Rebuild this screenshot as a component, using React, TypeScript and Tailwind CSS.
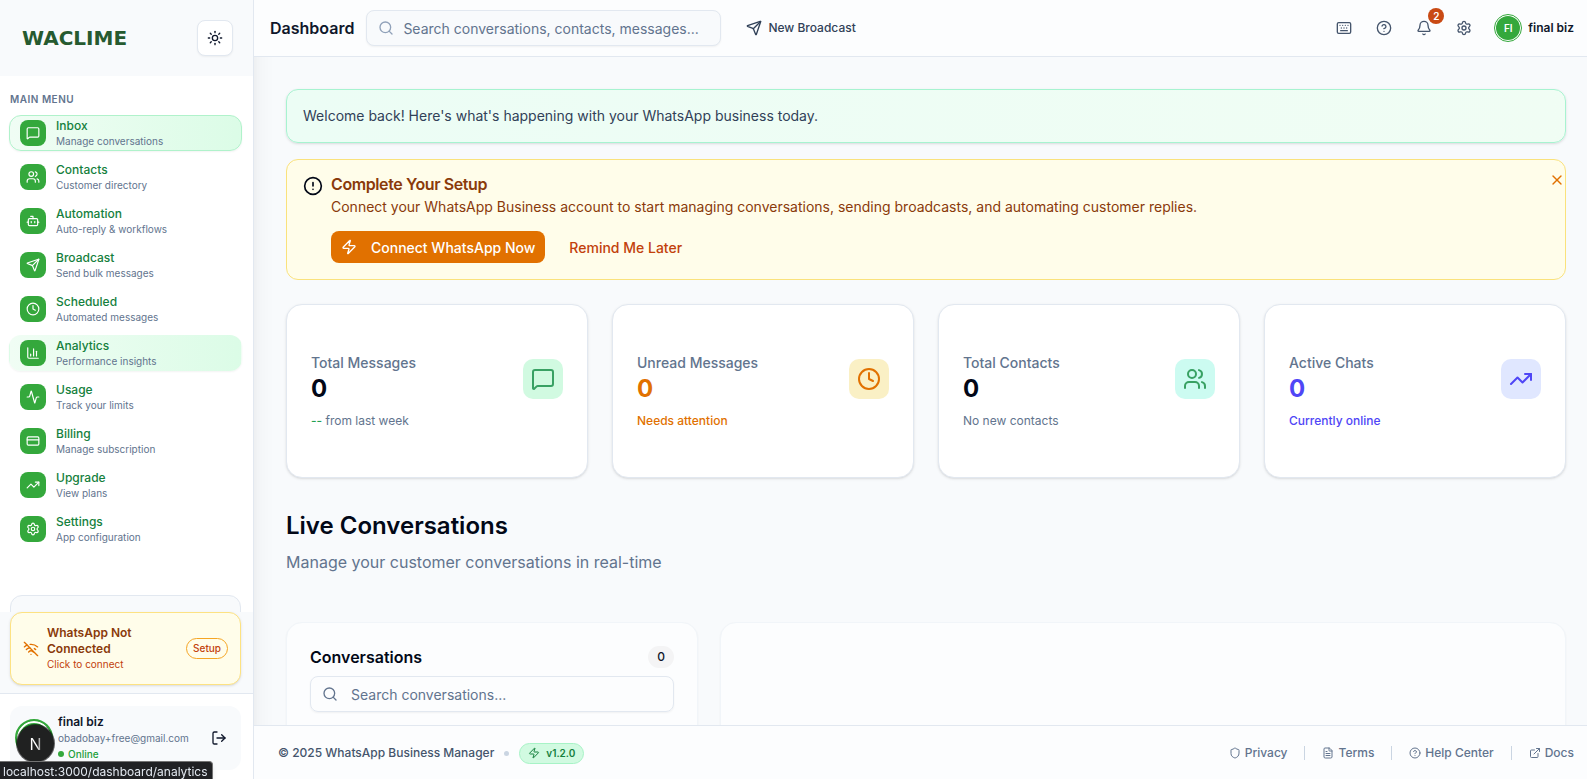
import React from 'react';
import clsx from 'clsx';
import {
    Activity,
    Bell,
    Bot,
    ChartColumn,
    CircleAlert,
    CircleQuestionMark,
    Clock,
    CreditCard,
    ExternalLink,
    FileText,
    Keyboard,
    LogOut,
    LucideIcon,
    MessageSquare,
    Search,
    Send,
    Settings,
    Shield,
    Sun,
    TrendingUp,
    Users,
    WifiOff,
    X,
    Zap,
} from 'lucide-react';

interface NavItem {
    title: string;
    description: string;
    icon: LucideIcon;
    state?: 'active' | 'hover';
}

const navItems: NavItem[] = [
    { title: 'Inbox', description: 'Manage conversations', icon: MessageSquare, state: 'active' },
    { title: 'Contacts', description: 'Customer directory', icon: Users },
    { title: 'Automation', description: 'Auto-reply & workflows', icon: Bot },
    { title: 'Broadcast', description: 'Send bulk messages', icon: Send },
    { title: 'Scheduled', description: 'Automated messages', icon: Clock },
    { title: 'Analytics', description: 'Performance insights', icon: ChartColumn, state: 'hover' },
    { title: 'Usage', description: 'Track your limits', icon: Activity },
    { title: 'Billing', description: 'Manage subscription', icon: CreditCard },
    { title: 'Upgrade', description: 'View plans', icon: TrendingUp },
    { title: 'Settings', description: 'App configuration', icon: Settings },
];

interface Stat {
    label: string;
    value: number;
    note: React.ReactNode;
    icon: LucideIcon;
    valueClass: string;
    noteClass: string;
    iconClass: string;
}

const stats: Stat[] = [
    {
        label: 'Total Messages',
        value: 0,
        note: <><span className="font-medium text-[#22a052]">--</span> from last week</>,
        icon: MessageSquare,
        valueClass: 'text-[#020817]',
        noteClass: 'text-slate-500',
        iconClass: 'bg-[#d1fae1] text-[#38a163]',
    },
    {
        label: 'Unread Messages',
        value: 0,
        note: 'Needs attention',
        icon: Clock,
        valueClass: 'text-[#e17100]',
        noteClass: 'font-medium text-[#e17100]',
        iconClass: 'bg-[#faf0c5] text-[#e17100]',
    },
    {
        label: 'Total Contacts',
        value: 0,
        note: 'No new contacts',
        icon: Users,
        valueClass: 'text-[#020817]',
        noteClass: 'text-slate-500',
        iconClass: 'bg-[#ccfbf1] text-[#38a163]',
    },
    {
        label: 'Active Chats',
        value: 0,
        note: 'Currently online',
        icon: TrendingUp,
        valueClass: 'text-[#4f46f6]',
        noteClass: 'font-medium text-[#4f46f6]',
        iconClass: 'bg-[#e0e7ff] text-[#4f46f6]',
    },
];

const footerLinks = [
    { label: 'Privacy', icon: Shield },
    { label: 'Terms', icon: FileText },
    { label: 'Help Center', icon: CircleQuestionMark },
    { label: 'Docs', icon: ExternalLink },
];

function Sidebar() {
    return (
        <aside className="relative flex w-[254px] shrink-0 flex-col border-r border-slate-200 bg-white shadow-xl">
            <div className="flex h-[76px] shrink-0 items-center justify-between bg-slate-50 pr-5 pl-[22px]">
                <span className="font-['DejaVu_Sans'] text-[20px] font-bold text-[#265a30]">WACLIME</span>
                <button
                    aria-label="Toggle theme"
                    className="flex size-9 items-center justify-center rounded-lg border border-slate-200 bg-white text-slate-900 shadow-xs"
                >
                    <Sun className="size-4" />
                </button>
            </div>

            <nav className="flex min-h-0 flex-1 flex-col overflow-hidden pt-4 pr-[11px] pl-[9px]">
                <h2 className="mb-2 px-px text-[10px] leading-[15px] font-semibold tracking-wider text-slate-500">MAIN MENU</h2>
                <ul className="flex flex-col gap-2">
                    {navItems.map(item => (
                        <li key={item.title}>
                            <a
                                href="#"
                                className={clsx(
                                    'flex h-9 items-center gap-[10px] rounded-xl border px-[10px]',
                                    item.state === 'active' && 'border-[#b0f2cb] bg-linear-to-r from-green-50 to-green-100 shadow-xs',
                                    item.state === 'hover' && 'border-transparent bg-linear-to-r from-green-50 to-green-100 shadow-xs',
                                    !item.state && 'border-transparent',
                                )}
                            >
                                <span className="flex size-[26px] items-center justify-center rounded-lg bg-[#34a83c] text-white">
                                    <item.icon className="size-[14px]" />
                                </span>
                                <span className="flex flex-col">
                                    <span className="text-[12px] leading-4 font-medium text-[#15803d]">{item.title}</span>
                                    <span className="text-[10px] leading-[15px] text-slate-500">{item.description}</span>
                                </span>
                            </a>
                        </li>
                    ))}
                </ul>
                <div className="ml-px mr-px mt-12 h-20 shrink-0 rounded-xl border border-slate-200 bg-slate-50" />
            </nav>

            <div className="shrink-0 bg-slate-50 pr-3 pb-2 pl-[10px]">
                <div className="flex items-center rounded-xl border border-[#fde282] bg-[#fffdea] px-3 py-3 shadow-sm">
                    <WifiOff className="size-4 shrink-0 text-[#e17100]" />
                    <div className="ml-2 flex-1">
                        <p className="text-[12px] leading-4 font-semibold text-[#8a3a0a]">WhatsApp Not Connected</p>
                        <p className="text-[10px] leading-[15px] text-[#c2410c]">Click to connect</p>
                    </div>
                    <button className="ml-7 h-[21px] rounded-full border border-[#f5a524] px-[6px] text-[10px] font-medium text-[#c2410c]">
                        Setup
                    </button>
                </div>
            </div>

            <div className="shrink-0 border-t border-slate-200 pt-3 pr-3 pb-[9px] pl-[10px]">
                <div className="flex h-16 items-center rounded-xl bg-slate-50 pr-3 pl-[5px]">
                    <span className="size-[38px] shrink-0 rounded-full border-2 border-[#34a83c] bg-[#34a83c] ring-2 ring-white ring-inset" />
                    <div className="ml-[5px] flex-1">
                        <p className="text-[12px] leading-4 font-semibold text-slate-900">final biz</p>
                        <p className="text-[10px] leading-4 text-slate-500">obadobay+free@gmail.com</p>
                        <p className="flex items-center gap-1 text-[10px] leading-4 font-medium text-[#22a03a]">
                            <span className="size-[6px] rounded-full bg-[#34a83c]" />
                            Online
                        </p>
                    </div>
                    <button aria-label="Log out" className="flex size-5 items-center justify-center text-slate-900">
                        <LogOut className="size-4" />
                    </button>
                </div>
            </div>
        </aside>
    );
}

function Header() {
    return (
        <header className="relative flex h-[57px] shrink-0 items-center border-b border-slate-200 bg-[#fcfdfe] pr-[13px] pl-4">
            <h1 className="text-[16px] font-semibold text-slate-900">Dashboard</h1>
            <label className="ml-3 flex h-9 w-[355px] items-center gap-[9px] rounded-lg border border-slate-200 bg-slate-50 px-[11px] shadow-xs">
                <Search className="size-4 shrink-0 text-slate-400" />
                <input
                    type="text"
                    aria-label="Search"
                    placeholder="Search conversations, contacts, messages..."
                    className="min-w-0 flex-1 bg-transparent text-[14px] outline-none placeholder:text-slate-500"
                />
            </label>
            <button className="ml-[25px] flex items-center gap-[6px] text-[12px] font-medium text-slate-700">
                <Send className="size-4" />
                New Broadcast
            </button>

            <div className="ml-auto flex items-center text-slate-600">
                <button aria-label="Keyboard shortcuts" className="flex size-10 items-center justify-center">
                    <Keyboard className="size-4" />
                </button>
                <button aria-label="Help" className="flex size-10 items-center justify-center">
                    <CircleQuestionMark className="size-4" />
                </button>
                <button aria-label="Notifications" className="relative flex size-10 items-center justify-center">
                    <Bell className="size-4" />
                    <span className="absolute top-0 right-0 flex size-4 items-center justify-center rounded-full bg-[#c94a14] text-[10px] font-semibold text-white">
                        2
                    </span>
                </button>
                <button aria-label="Settings" className="flex size-10 items-center justify-center">
                    <Settings className="size-4" />
                </button>
            </div>
            <button className="ml-[10px] flex items-center gap-[6px] text-[12px] font-semibold text-slate-900">
                <span className="rounded-full border border-[#34a83c] bg-white p-px">
                    <span className="flex size-6 items-center justify-center rounded-full bg-[#34a83c] text-[10px] font-semibold text-white">FI</span>
                </span>
                final biz
            </button>
        </header>
    );
}

function SetupBanner() {
    return (
        <section className="mt-4 flex items-start rounded-xl border border-[#fae27c] bg-[#fffdea] pt-4 pb-4 pl-4">
            <CircleAlert className="size-5 shrink-0 text-[#020817]" />
            <div className="ml-2 flex-1">
                <h2 className="text-[16px] leading-4 font-semibold tracking-tight text-[#8a3a0a]">Complete Your Setup</h2>
                <p className="mt-1 text-[14px] leading-[22px] text-[#8a3a0a]">
                    Connect your WhatsApp Business account to start managing conversations, sending broadcasts, and automating customer replies.
                </p>
                <div className="mt-[13px] flex items-center gap-6">
                    <button className="flex h-8 items-center gap-[14px] rounded-lg bg-[#e17100] px-[10px] text-[14px] font-medium text-white">
                        <Zap className="size-4" />
                        Connect WhatsApp Now
                    </button>
                    <button className="text-[14px] font-medium text-[#c2410c]">Remind Me Later</button>
                </div>
            </div>
            <button aria-label="Dismiss" className="-mt-1 text-[#e17100]">
                <X className="size-4" />
            </button>
        </section>
    );
}

function StatCard({ stat }: { stat: Stat }) {
    return (
        <article className="flex h-[174px] items-center justify-between rounded-2xl border border-slate-200 bg-white px-6 shadow-sm">
            <div>
                <p className="text-[14px] leading-5 font-medium text-slate-500">{stat.label}</p>
                <p className={clsx('text-[24px] leading-8 font-bold', stat.valueClass)}>{stat.value}</p>
                <p className={clsx('mt-2 text-[12px] leading-4', stat.noteClass)}>{stat.note}</p>
            </div>
            <span className={clsx('mb-6 flex size-10 items-center justify-center rounded-[10px]', stat.iconClass)}>
                <stat.icon className="size-6" />
            </span>
        </article>
    );
}

function Footer() {
    return (
        <footer className="relative flex h-[54px] shrink-0 items-center justify-between border-t border-slate-200 bg-[#fcfdfe] pt-px pr-[13px] pl-6">
            <div className="flex items-center text-[12px] font-medium text-slate-600">
                © 2025 WhatsApp Business Manager
                <span className="ml-[10px] size-[5px] rounded-full bg-slate-300" />
                <span className="ml-[10px] flex h-[21px] items-center gap-[6px] rounded-full border border-[#a7f3c6] bg-[#d1fae1] px-2 text-[10px] font-semibold text-[#15803d]">
                    <Zap className="size-3" />
                    v1.2.0
                </span>
            </div>
            <nav className="flex items-center divide-x divide-slate-300 text-[12px] leading-[14px] font-medium text-slate-500">
                {footerLinks.map(link => (
                    <a key={link.label} href="#" className="flex items-center gap-1 px-[17px] last:pr-0">
                        <link.icon className="size-3" />
                        {link.label}
                    </a>
                ))}
            </nav>
        </footer>
    );
}

export default function App() {
    return (
        <div className="flex h-screen overflow-hidden bg-slate-50 font-[Inter,sans-serif]">
            <Sidebar />
            <div className="flex min-w-0 flex-1 flex-col">
                <Header />
                <main className="min-h-0 flex-1 overflow-hidden pt-8 pr-[21px] pl-8">
                    <p className="rounded-xl border border-[#a7f3d0] bg-linear-to-r from-[#ecfdf5] to-green-50 p-4 text-[14px] leading-5 text-slate-700 shadow-sm">
                        Welcome back! Here's what's happening with your WhatsApp business today.
                    </p>
                    <SetupBanner />

                    <div className="mt-6 grid grid-cols-4 gap-6">
                        {stats.map(stat => <StatCard key={stat.label} stat={stat} />)}
                    </div>

                    <h2 className="mt-8 text-[24px] leading-8 font-semibold text-[#020817]">Live Conversations</h2>
                    <p className="mt-2 text-[16px] leading-6 text-slate-500">Manage your customer conversations in real-time</p>

                    <div className="mt-12 grid grid-cols-3 gap-[22px]">
                        <section className="h-[600px] rounded-2xl border border-slate-100 bg-[#fcfdfe] p-[23px] shadow-xs">
                            <div className="flex items-center justify-between">
                                <h3 className="text-[16px] leading-[22px] font-semibold text-[#020817]">Conversations</h3>
                                <span className="rounded-full bg-zinc-100 px-[9px] py-[3px] text-[12px] leading-4 font-medium text-slate-900">0</span>
                            </div>
                            <label className="mt-2 flex h-9 items-center gap-[13px] rounded-lg border border-slate-200 px-[11px] shadow-xs">
                                <Search className="size-4 shrink-0 text-slate-500" />
                                <input
                                    type="text"
                                    aria-label="Search conversations"
                                    placeholder="Search conversations..."
                                    className="min-w-0 flex-1 bg-transparent text-[14px] outline-none placeholder:text-slate-500"
                                />
                            </label>
                        </section>
                        <section className="col-span-2 h-[600px] rounded-2xl border border-slate-100 bg-[#fcfdfe] shadow-xs" />
                    </div>
                </main>
                <Footer />
            </div>

            {/* dev tools badge and the browser's link preview float over the page */}
            <button
                aria-label="Open dev tools"
                className="fixed bottom-[17px] left-[17px] flex size-[37px] items-center justify-center rounded-full bg-[#202121] ring-1 ring-black/60"
            >
                <span className="bg-linear-to-r from-white from-60% to-neutral-500 bg-clip-text text-[16px] leading-5 text-transparent">N</span>
            </button>
            <div className="fixed bottom-0 left-0 h-[18px] rounded-tr-sm border-t border-r border-neutral-500 bg-[#202124] pr-1 pl-[3px] text-[12px] leading-[19px] text-slate-200 shadow-md">
                localhost:3000/dashboard/analytics
            </div>
        </div>
    );
}
